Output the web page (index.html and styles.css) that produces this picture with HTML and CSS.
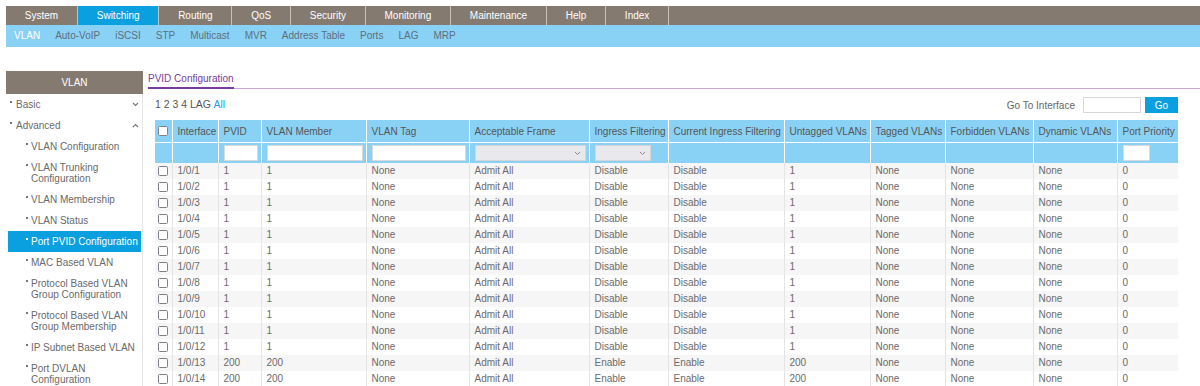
FILE: index.html
```html
<!DOCTYPE html>
<html lang="en">
<head>
    <meta charset="UTF-8">
    <meta name="viewport" content="width=device-width, initial-scale=1.0">
    <title>PVID Configuration</title>
    <link rel="stylesheet" href="styles.css">
</head>
<body>
    <div class="top-nav">
        <a class="top-tab">System</a>
        <a class="top-tab active">Switching</a>
        <a class="top-tab">Routing</a>
        <a class="top-tab">QoS</a>
        <a class="top-tab">Security</a>
        <a class="top-tab">Monitoring</a>
        <a class="top-tab">Maintenance</a>
        <a class="top-tab">Help</a>
        <a class="top-tab">Index</a>
    </div>
    <div class="sub-nav">
        <a class="sub-tab active">VLAN</a>
        <a class="sub-tab">Auto-VoIP</a>
        <a class="sub-tab">iSCSI</a>
        <a class="sub-tab">STP</a>
        <a class="sub-tab">Multicast</a>
        <a class="sub-tab">MVR</a>
        <a class="sub-tab">Address Table</a>
        <a class="sub-tab">Ports</a>
        <a class="sub-tab">LAG</a>
        <a class="sub-tab">MRP</a>
    </div>

    <div class="page">
        <aside class="sidebar">
            <div class="sidebar-title">VLAN</div>
            <ul class="side-menu">
                <li class="menu-group"><span class="dot"></span>Basic
                    <svg class="chevron" width="7" height="5" viewBox="0 0 7 5"><path d="M1 1l2.5 2.5L6 1" fill="none" stroke="#777" stroke-width="1.1"/></svg>
                </li>
                <li class="menu-group"><span class="dot"></span>Advanced
                    <svg class="chevron" width="7" height="5" viewBox="0 0 7 5"><path d="M1 4l2.5-2.5L6 4" fill="none" stroke="#777" stroke-width="1.1"/></svg>
                </li>
                <li class="menu-item"><span class="dot"></span>VLAN Configuration</li>
                <li class="menu-item"><span class="dot"></span>VLAN Trunking<br>Configuration</li>
                <li class="menu-item"><span class="dot"></span>VLAN Membership</li>
                <li class="menu-item"><span class="dot"></span>VLAN Status</li>
                <li class="menu-item active"><span class="dot"></span>Port PVID Configuration</li>
                <li class="menu-item"><span class="dot"></span>MAC Based VLAN</li>
                <li class="menu-item"><span class="dot"></span>Protocol Based VLAN<br>Group Configuration</li>
                <li class="menu-item"><span class="dot"></span>Protocol Based VLAN<br>Group Membership</li>
                <li class="menu-item"><span class="dot"></span>IP Subnet Based VLAN</li>
                <li class="menu-item"><span class="dot"></span>Port DVLAN<br>Configuration</li>
            </ul>
        </aside>

        <main class="content">
            <div class="tab-bar">
                <span class="tab">PVID Configuration</span>
            </div>

            <div class="toolbar">
                <div class="pager">1 2 3 4 LAG <a class="pager-all">All</a></div>
                <div class="goto">
                    <span>Go To Interface</span>
                    <input class="goto-input" type="text">
                    <button class="go-button">Go</button>
                </div>
            </div>

            <table class="pvid-table">
                <colgroup>
                    <col style="width:17px"><col style="width:46px"><col style="width:43px">
                    <col style="width:105px"><col style="width:103px"><col style="width:120px">
                    <col style="width:79px"><col style="width:116px"><col style="width:86px">
                    <col style="width:75px"><col style="width:88px"><col style="width:84px">
                    <col style="width:61px">
                </colgroup>
                <thead>
                    <tr class="head-row">
                        <th class="check-cell"><span class="check"></span></th>
                        <th>Interface</th>
                        <th>PVID</th>
                        <th>VLAN Member</th>
                        <th>VLAN Tag</th>
                        <th>Acceptable Frame</th>
                        <th>Ingress Filtering</th>
                        <th>Current Ingress Filtering</th>
                        <th>Untagged VLANs</th>
                        <th>Tagged VLANs</th>
                        <th>Forbidden VLANs</th>
                        <th>Dynamic VLANs</th>
                        <th>Port Priority</th>
                    </tr>
                    <tr class="filter-row">
                        <th></th>
                        <th></th>
                        <th><input class="filter-input" type="text"></th>
                        <th><input class="filter-input" type="text"></th>
                        <th><input class="filter-input" type="text"></th>
                        <th><span class="filter-select"><svg width="7" height="5" viewBox="0 0 7 5"><path d="M1 1l2.5 2.5L6 1" fill="none" stroke="#888" stroke-width="1"/></svg></span></th>
                        <th><span class="filter-select short"><svg width="7" height="5" viewBox="0 0 7 5"><path d="M1 1l2.5 2.5L6 1" fill="none" stroke="#888" stroke-width="1"/></svg></span></th>
                        <th></th>
                        <th></th>
                        <th></th>
                        <th></th>
                        <th></th>
                        <th><input class="filter-input tiny" type="text"></th>
                    </tr>
                </thead>
                <tbody>
                    <tr><td class="check-cell"><span class="check"></span></td><td>1/0/1</td><td>1</td><td>1</td><td>None</td><td>Admit All</td><td>Disable</td><td>Disable</td><td>1</td><td>None</td><td>None</td><td>None</td><td>0</td></tr>
                    <tr><td class="check-cell"><span class="check"></span></td><td>1/0/2</td><td>1</td><td>1</td><td>None</td><td>Admit All</td><td>Disable</td><td>Disable</td><td>1</td><td>None</td><td>None</td><td>None</td><td>0</td></tr>
                    <tr><td class="check-cell"><span class="check"></span></td><td>1/0/3</td><td>1</td><td>1</td><td>None</td><td>Admit All</td><td>Disable</td><td>Disable</td><td>1</td><td>None</td><td>None</td><td>None</td><td>0</td></tr>
                    <tr><td class="check-cell"><span class="check"></span></td><td>1/0/4</td><td>1</td><td>1</td><td>None</td><td>Admit All</td><td>Disable</td><td>Disable</td><td>1</td><td>None</td><td>None</td><td>None</td><td>0</td></tr>
                    <tr><td class="check-cell"><span class="check"></span></td><td>1/0/5</td><td>1</td><td>1</td><td>None</td><td>Admit All</td><td>Disable</td><td>Disable</td><td>1</td><td>None</td><td>None</td><td>None</td><td>0</td></tr>
                    <tr><td class="check-cell"><span class="check"></span></td><td>1/0/6</td><td>1</td><td>1</td><td>None</td><td>Admit All</td><td>Disable</td><td>Disable</td><td>1</td><td>None</td><td>None</td><td>None</td><td>0</td></tr>
                    <tr><td class="check-cell"><span class="check"></span></td><td>1/0/7</td><td>1</td><td>1</td><td>None</td><td>Admit All</td><td>Disable</td><td>Disable</td><td>1</td><td>None</td><td>None</td><td>None</td><td>0</td></tr>
                    <tr><td class="check-cell"><span class="check"></span></td><td>1/0/8</td><td>1</td><td>1</td><td>None</td><td>Admit All</td><td>Disable</td><td>Disable</td><td>1</td><td>None</td><td>None</td><td>None</td><td>0</td></tr>
                    <tr><td class="check-cell"><span class="check"></span></td><td>1/0/9</td><td>1</td><td>1</td><td>None</td><td>Admit All</td><td>Disable</td><td>Disable</td><td>1</td><td>None</td><td>None</td><td>None</td><td>0</td></tr>
                    <tr><td class="check-cell"><span class="check"></span></td><td>1/0/10</td><td>1</td><td>1</td><td>None</td><td>Admit All</td><td>Disable</td><td>Disable</td><td>1</td><td>None</td><td>None</td><td>None</td><td>0</td></tr>
                    <tr><td class="check-cell"><span class="check"></span></td><td>1/0/11</td><td>1</td><td>1</td><td>None</td><td>Admit All</td><td>Disable</td><td>Disable</td><td>1</td><td>None</td><td>None</td><td>None</td><td>0</td></tr>
                    <tr><td class="check-cell"><span class="check"></span></td><td>1/0/12</td><td>1</td><td>1</td><td>None</td><td>Admit All</td><td>Disable</td><td>Disable</td><td>1</td><td>None</td><td>None</td><td>None</td><td>0</td></tr>
                    <tr><td class="check-cell"><span class="check"></span></td><td>1/0/13</td><td>200</td><td>200</td><td>None</td><td>Admit All</td><td>Enable</td><td>Enable</td><td>200</td><td>None</td><td>None</td><td>None</td><td>0</td></tr>
                    <tr><td class="check-cell"><span class="check"></span></td><td>1/0/14</td><td>200</td><td>200</td><td>None</td><td>Admit All</td><td>Enable</td><td>Enable</td><td>200</td><td>None</td><td>None</td><td>None</td><td>0</td></tr>
                </tbody>
            </table>
        </main>
    </div>
</body>
</html>
```

FILE: styles.css
```css
body {
    margin: 0;
    padding-top: 6px;
    font-family: "Liberation Sans", Arial, sans-serif;
    font-size: 10px;
    color: #666;
    background-color: #fff;
    overflow: hidden;
}

/* top menu */
.top-nav {
    display: flex;
    height: 19px;
    margin-left: 6px;
    background-color: #857a70;
}

.top-tab {
    padding: 0 18.8px;
    line-height: 19px;
    color: #fff;
    border-right: 1px solid #c8c1ba;
    cursor: pointer;
}

.top-tab.active {
    background-color: #0aa0e0;
}

.sub-nav {
    display: flex;
    height: 22px;
    margin-left: 6px;
    background-color: #8ad2f5;
}

.sub-tab {
    padding: 0 7.5px;
    line-height: 22px;
    color: #5d6f7d;
    cursor: pointer;
}

.sub-tab:first-child {
    padding-left: 8px;
}

.sub-tab.active {
    color: #fff;
}

/* page */
.page {
    display: flex;
    margin-top: 24px;
    padding-left: 6px;
}

.sidebar {
    width: 137px;
    flex-shrink: 0;
}

.sidebar-title {
    height: 23px;
    line-height: 23px;
    text-align: center;
    color: #fff;
    background-color: #857a70;
}

.side-menu {
    list-style: none;
    margin: 0;
    padding: 0 0 20px;
    border-right: 1px solid #e6e6e6;
}

.side-menu li {
    line-height: 11px;
    color: #6a6a6a;
}

.dot {
    display: inline-block;
    width: 2px;
    height: 2px;
    margin-right: 3px;
    vertical-align: 5px;
    background-color: #777;
}

.menu-group {
    position: relative;
    padding: 5px 0 5px 4px;
}

.menu-group .dot {
    margin-right: 4px;
}

.chevron {
    position: absolute;
    right: 3px;
    top: 8px;
}

.menu-item {
    padding: 5px 0 5px 25px;
    text-indent: -5px;
}

.menu-item.active {
    margin: 0 1px 0 2px;
    padding-left: 23px;
    color: #fff;
    background-color: #0aa0e0;
}

.menu-item.active .dot {
    background-color: #fff;
}

/* content */
.content {
    flex: 1;
    margin-left: 5px;
}

.tab-bar {
    height: 17px;
    border-bottom: 1px solid #c7a6da;
}

.tab {
    display: inline-block;
    padding-top: 2px;
    line-height: 12px;
    height: 14px;
    color: #7a3b9c;
    border-bottom: 2px solid #7a3b9c;
}

.toolbar {
    display: flex;
    justify-content: space-between;
    align-items: center;
    height: 16px;
    margin: 8px 22px 7px 7px;
}

.pager {
    font-size: 10.5px;
    color: #555;
    margin-top: -2px;
}

.pager-all {
    color: #1a9fe0;
    cursor: pointer;
}

.goto {
    display: flex;
    align-items: center;
}

.goto span {
    margin-right: 8px;
}

.goto-input {
    width: 58px;
    height: 16px;
    box-sizing: border-box;
    margin: 0 4px 0 0;
    border: 1px solid #d8d8d8;
    padding: 0;
}

.go-button {
    width: 33px;
    height: 16px;
    padding: 0;
    border: none;
    font-family: inherit;
    font-size: 10px;
    color: #fff;
    background-color: #0aa0e0;
    cursor: pointer;
}

/* table */
.pvid-table {
    margin-left: 7px;
    width: 1023px;
    table-layout: fixed;
    border-collapse: collapse;
}

.pvid-table th {
    padding: 0 3px 0 5px;
    text-align: left;
    font-weight: normal;
    color: #555;
    white-space: nowrap;
    background-color: #8ad2f5;
    border-left: 1px solid #fff;
}

.head-row th {
    height: 22px;
}

.filter-row th {
    height: 20px;
    border-top: 1px solid #fff;
}

.pvid-table th:first-child,
.pvid-table td:first-child {
    border-left: none;
}

.check-cell {
    padding: 0 0 0 3px !important;
}

.check {
    display: block;
    width: 8px;
    height: 8px;
    border: 1.5px solid #80808a;
    border-radius: 1.5px;
    background-color: #fff;
}

.filter-input {
    display: block;
    width: 100%;
    height: 16px;
    box-sizing: border-box;
    margin: 0;
    padding: 0;
    border: 1px solid #d9d9d9;
    background-color: #fff;
}

.filter-input.tiny {
    width: 27px;
}

.filter-select {
    display: flex;
    justify-content: flex-end;
    align-items: center;
    width: 100%;
    height: 16px;
    box-sizing: border-box;
    padding-right: 4px;
    border: 1px solid #d5d5d8;
    background-color: #e9e9ed;
}

.filter-select.short {
    width: 56px;
}

.pvid-table td {
    height: 16px;
    padding: 0 3px 0 5px;
    line-height: 16px;
    color: #6b6b6b;
    white-space: nowrap;
    border-left: 1px solid #e4e4e4;
}

.pvid-table tbody tr:nth-child(odd) {
    background-color: #f6f6f6;
}
```
